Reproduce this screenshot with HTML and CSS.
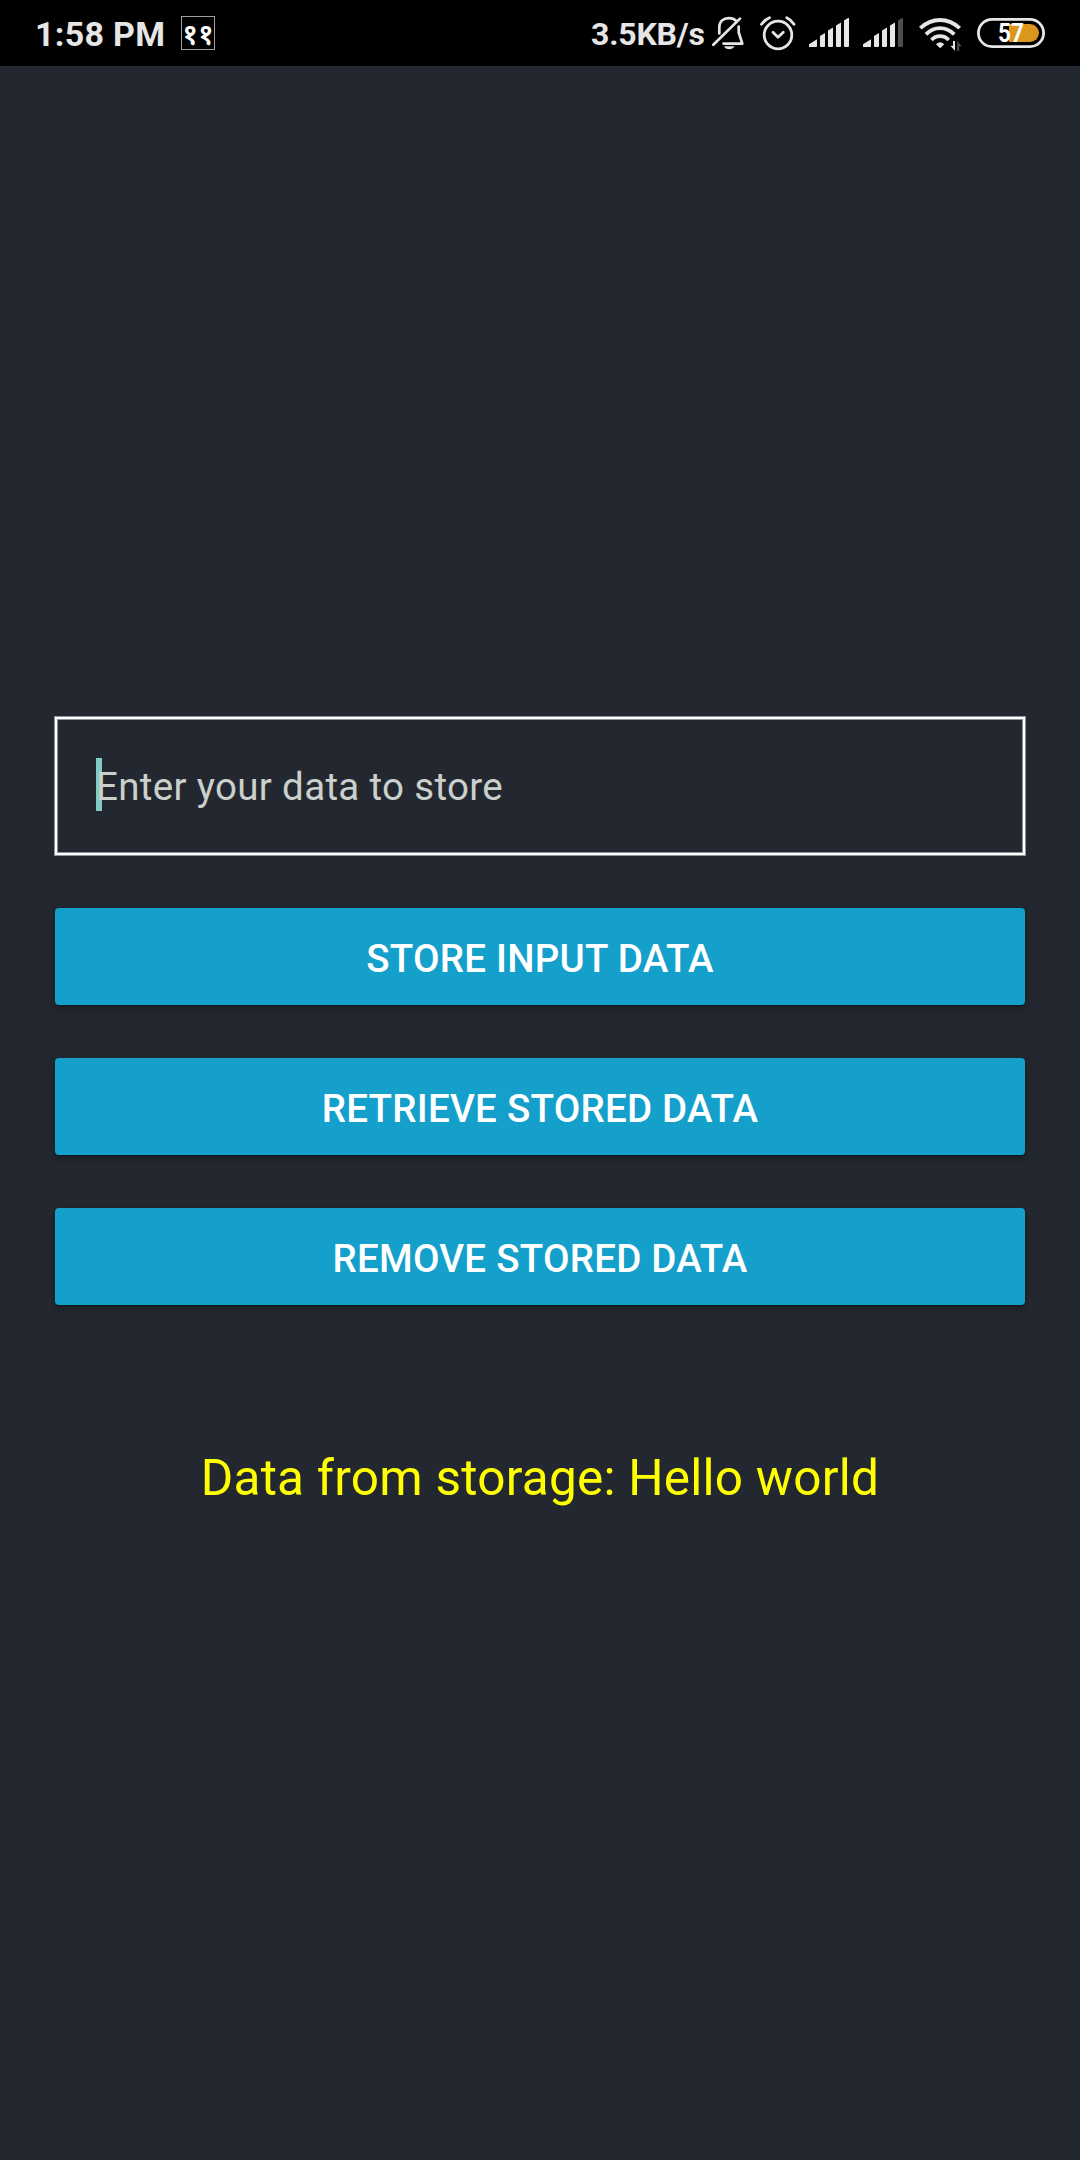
FILE: index.html
```html
<!DOCTYPE html>
<html lang="en">
<head>
<meta charset="utf-8">
<title>Data storage</title>
<link rel="stylesheet" href="styles.css">
</head>
<body>
<header class="status">
  <span class="clock">1:58 PM</span>
  <span class="badge">११</span>
  <span class="speed">3.5KB/s</span>
  <svg class="icon" width="44" height="66" viewBox="708 0 44 66" fill="none" stroke="#e6e6e6" stroke-width="2.7" stroke-linecap="round" stroke-linejoin="round">
    <path d="M719.3 33.5V27.5C719.3 21.5 723.5 18.2 729 18.2C732 18.2 734.3 19 736 20.8"/>
    <path d="M738.7 26.5V32.5L742.3 43.6H723.5"/>
    <path d="M713.3 44.8L740 18.6"/>
    <path d="M724 46.3H734.5C733.5 48.2 731.7 49.2 729.2 49.2S725 48.2 724 46.3Z" fill="#e6e6e6" stroke="none"/>
  </svg>
  <svg class="icon" width="50" height="66" viewBox="752 0 50 66" fill="none" stroke="#e6e6e6" stroke-width="2.8" stroke-linecap="round" stroke-linejoin="round">
    <circle cx="778" cy="35" r="13.8"/>
    <path d="M773 32.2L778 37.2L783.3 32.2"/>
    <path d="M761.5 24.3Q764.5 19.8 769.5 17.7M786.8 17.7Q791.3 19.8 794 24.3"/>
  </svg>
  <svg class="icon" width="54" height="66" viewBox="802 0 54 66" fill="#e6e6e6">
    <path d="M809 47V44.3L817 39.3V46Q817 47 816 47Z"/>
    <path d="M820 36L825 33V46Q825 47 824 47H821Q820 47 820 46Z"/>
    <path d="M828 30.5L833 27.5V46Q833 47 832 47H829Q828 47 828 46Z"/>
    <path d="M836 25.5L841 22.5V46Q841 47 840 47H837Q836 47 836 46Z"/>
    <path d="M844 20.5L848 18H849V46Q849 47 848 47H845Q844 47 844 46Z"/>
  </svg>
  <svg class="icon" width="54" height="66" viewBox="856 0 54 66" fill="#e6e6e6">
    <path d="M863 47V44.3L871 39.3V46Q871 47 870 47Z"/>
    <path d="M874 36L879 33V46Q879 47 878 47H875Q874 47 874 46Z"/>
    <path d="M882 30.5L887 27.5V46Q887 47 886 47H883Q882 47 882 46Z"/>
    <path d="M890 25.5L895 22.5V46Q895 47 894 47H891Q890 47 890 46Z"/>
    <path fill="#4d4d4d" d="M898 20.5L902 18H903V46Q903 47 902 47H899Q898 47 898 46Z"/>
  </svg>
  <svg class="icon" width="60" height="66" viewBox="910 0 60 66" fill="none" stroke="#e6e6e6" stroke-width="3.8">
    <path d="M920.3 28.2Q929 20 940 20T959.7 28.2"/>
    <path d="M926 34.4Q932 28.2 940 28.2T954.3 34.4"/>
    <path d="M931.5 40Q935 36.2 940 36.2T948.7 40"/>
    <path d="M936 44.3Q940 40.2 944.3 44.3L940.2 48.3Z" fill="#e6e6e6" stroke="none"/>
    <path d="M955 41V51L950.5 45.8H953V41Z" fill="#e6e6e6" stroke="none"/>
    <path d="M957.2 51V41L961.8 46.2H959.2V51Z" fill="#4d4d4d" stroke="none"/>
  </svg>
  <svg class="icon" width="110" height="66" viewBox="970 0 110 66">
    <path d="M1009 24H1030A9 9 0 0 1 1030 42H1009Z" fill="#dc961e"/>
    <rect x="978.4" y="19.4" width="65.2" height="27.2" rx="13.6" fill="none" stroke="#e6e6e6" stroke-width="2.8"/>
    <text class="level" x="998" y="42" textLength="26" lengthAdjust="spacingAndGlyphs">57</text>
  </svg>
</header>
<main class="screen">
  <div class="field"><span class="caret"></span><span class="hint">Enter your data to store</span></div>
  <button class="btn">STORE INPUT DATA</button>
  <button class="btn">RETRIEVE STORED DATA</button>
  <button class="btn">REMOVE STORED DATA</button>
  <p class="result">Data from storage: Hello world</p>
</main>
</body>
</html>
```
FILE: styles.css
```css
* { box-sizing: border-box; }
body {
  margin: 0;
  height: 2160px;
  background: #232830;
  font-family: Roboto, "Noto Sans", sans-serif;
  overflow: hidden;
}
.status {
  display: flex;
  align-items: center;
  height: 66px;
  padding-left: 35px;
  background: #000;
  color: #e6e6e6;
  white-space: nowrap;
}
.clock {
  width: 146px;
  padding-top: 2px;
  font-size: 34px;
  font-weight: 700;
  letter-spacing: .3px;
  line-height: 68px;
}
.badge {
  display: flex;
  align-items: center;
  justify-content: center;
  width: 34px;
  height: 34px;
  border: 1px solid #a0a0a0;
  color: #fff;
  font-family: "Noto Sans", sans-serif;
  font-size: 29px;
  font-weight: 600;
  line-height: 32px;
}
.speed {
  width: 117px;
  margin-left: auto;
  padding-top: 2px;
  font-size: 32px;
  font-weight: 700;
  letter-spacing: -.2px;
  line-height: 68px;
}
.icon { flex: none; display: block; }
.level {
  fill: #fff;
  font-size: 25px;
  font-weight: 700;
}
.screen {
  display: flex;
  flex-direction: column;
  padding: 651px 55px 0;
}
.field {
  position: relative;
  display: flex;
  align-items: center;
  height: 138px;
  margin-bottom: 53px;
  padding-left: 39px;
  border: 2px solid #fff;
  box-shadow: 0 0 0 1px #8f9296, inset 0 0 0 1px #8f9296;
}
.caret {
  position: absolute;
  left: 39px;
  top: 39px;
  width: 6px;
  height: 53px;
  background: #80cbc4;
}
.hint {
  position: relative;
  color: #cbd0cc;
  font-size: 38.5px;
  letter-spacing: .33px;
}
.btn {
  height: 97px;
  margin: 0 0 53px;
  padding: 3px 0 0;
  border: 0;
  border-radius: 4px;
  background: #159fcb;
  box-shadow: 0 3px 8px rgba(0, 0, 0, .3), 0 1px 1px rgba(0, 20, 25, .5);
  color: #fff;
  font: 500 38.5px Roboto, sans-serif;
  letter-spacing: .25px;
}
.result {
  margin: 90px 0 0;
  color: #ff0;
  font-size: 49.5px;
  letter-spacing: .25px;
  line-height: 60px;
  text-align: center;
}
```
